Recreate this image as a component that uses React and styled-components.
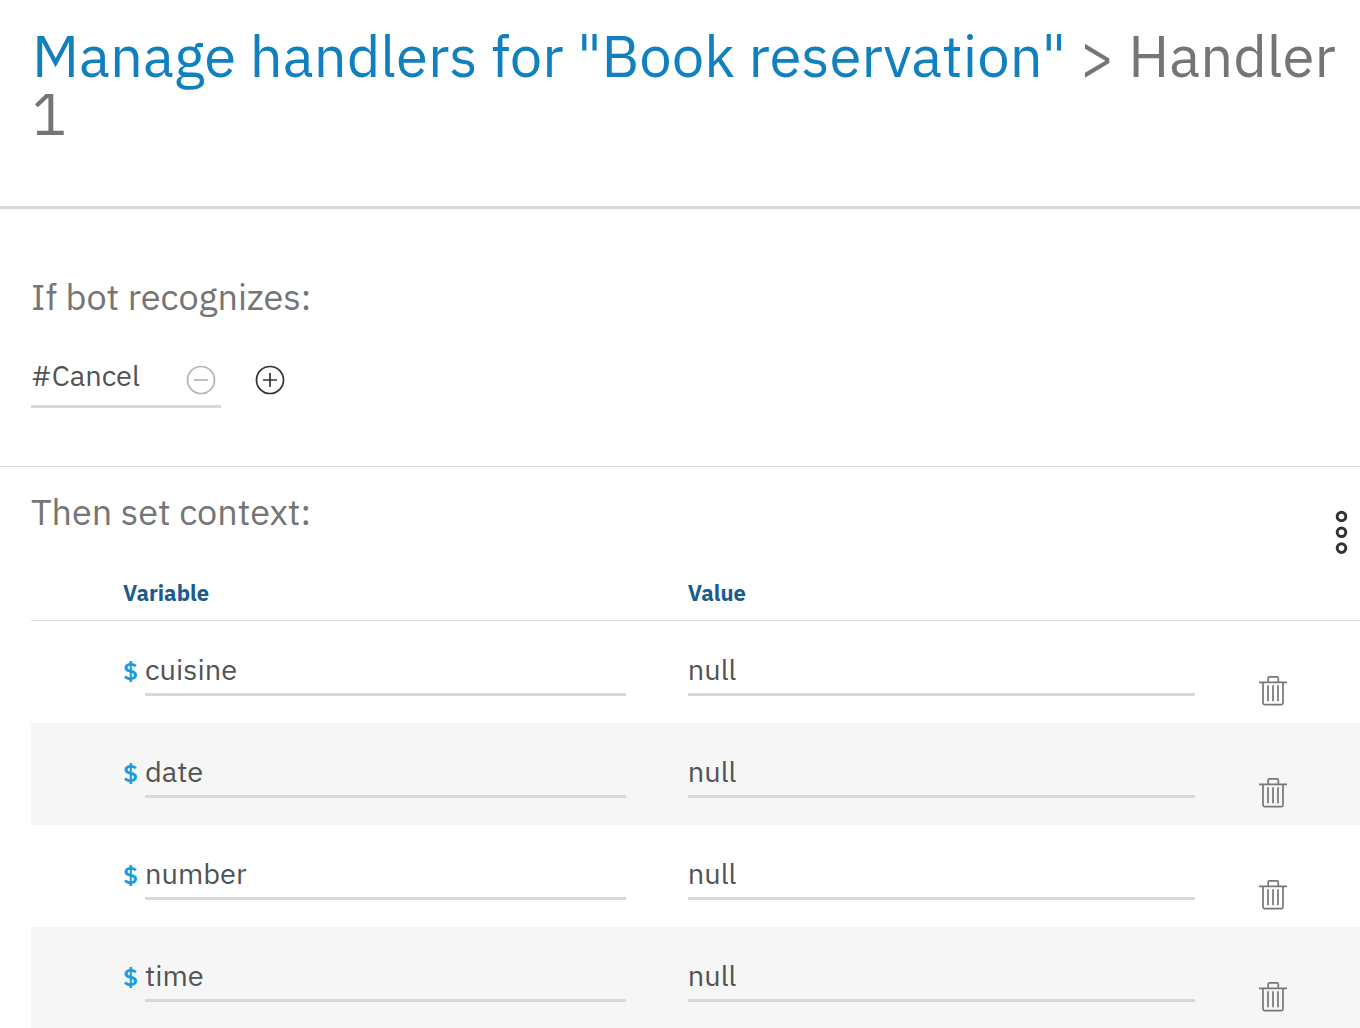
import React, { useState } from "react";
import styled, { createGlobalStyle } from "styled-components";

const GlobalStyle = createGlobalStyle`
  *, *::before, *::after { box-sizing: border-box; }
  body {
    margin: 0;
    background: #fff;
    color: #565656;
    font-family: "IBM Plex Sans", Roboto, "Noto Sans", sans-serif;
  }
`;

const Page = styled.main`
  height: 100vh;
  overflow-y: auto;
  scrollbar-width: none;
`;

const Header = styled.header`
  padding: 27px 16px 63px 32px;
  border-bottom: 3px solid #d8d8d8;
`;

const Title = styled.h1`
  margin: 0;
  font-size: 58px;
  line-height: 58px;
  font-weight: 400;
  color: #757575;
`;

const TitleLink = styled.a`
  color: #1180be;
  text-decoration: none;
`;

const Conditions = styled.section`
  padding: 64px 32px 58px 31px;
  border-bottom: 1px solid #d8d8d8;
`;

const SectionTitle = styled.h2`
  margin: 0;
  font-size: 36px;
  line-height: 48px;
  font-weight: 400;
  color: #757575;
`;

const ConditionRow = styled.div`
  display: flex;
  align-items: center;
  gap: 34px;
  margin-top: 30px;
`;

const Condition = styled.div`
  display: flex;
  align-items: flex-end;
  width: 190px;
  height: 57px;
  padding: 0 5px 10px 0;
  border-bottom: 3px solid #d8d8d8;
`;

const TextField = styled.input`
  flex: 1;
  min-width: 0;
  width: 100%;
  height: ${(p) => (p.$underlined ? 51 : 40)}px;
  padding: 0;
  border: 0;
  border-bottom: ${(p) => (p.$underlined ? "3px solid #d8d8d8" : "0")};
  border-radius: 0;
  outline: 0;
  background: transparent;
  color: #525354;
  font: inherit;
  font-size: 29px;
`;

const IconButton = styled.button`
  display: flex;
  flex: none;
  padding: 0;
  border: 0;
  background: transparent;
  color: ${(p) => p.$color};
  cursor: pointer;
`;

const Context = styled.section`
  padding: 21px 0 0 31px;
`;

const ContextBar = styled.div`
  display: flex;
  align-items: flex-start;
  justify-content: space-between;
  height: 78px;
  padding-right: 12px;
`;

const MenuButton = styled(IconButton)`
  padding-top: 22px;
`;

const VariableTable = styled.table`
  width: 100%;
  table-layout: fixed;
  border-collapse: separate;
  border-spacing: 0;
`;

const HeadCell = styled.th`
  width: ${(p) => p.$width || "auto"};
  height: 55px;
  padding: 0;
  border-bottom: 1px solid #d8d8d8;
  font-size: 22px;
  line-height: 28px;
  font-weight: 700;
  text-align: left;
  color: #1d5b8c;
`;

const Row = styled.tr`
  &:nth-child(even) { background: #f6f6f6; }
`;

const Cell = styled.td`
  height: 102px;
  padding: 24px ${(p) => (p.$gap || 0)}px 0 0;
  vertical-align: top;
`;

const VariableField = styled.label`
  display: flex;
  align-items: center;
`;

const Dollar = styled.span`
  flex: none;
  width: 22px;
  font-size: 25px;
  font-weight: 600;
  color: #1a9be0;
`;

const DeleteCell = styled(Cell)`
  padding: 55px 0 0;
`;

const CircleIcon = ({ plus }) => (
  <svg width="30" height="30" viewBox="0 0 30 30" fill="none" stroke="currentColor" strokeWidth="1.7" aria-hidden="true">
    <circle cx="15" cy="15" r="13.5" />
    <path d={plus ? "M8 15H22M15 8V22" : "M8 15H22"} />
  </svg>
);

const MenuIcon = () => (
  <svg width="13" height="44" viewBox="0 0 13 44" fill="none" stroke="currentColor" strokeWidth="3" aria-hidden="true">
    <circle cx="6.5" cy="6.5" r="4.3" />
    <circle cx="6.5" cy="22.3" r="4.3" />
    <circle cx="6.5" cy="38.1" r="4.3" />
  </svg>
);

const TrashIcon = () => (
  <svg width="28" height="30" viewBox="0 0 28 30" fill="none" stroke="currentColor" strokeWidth="1.7" aria-hidden="true">
    <path d="M0 6.3H28M9.2 6V2.2Q9.2 .9 10.5 .9H18Q19.3 .9 19.3 2.2V6" />
    <path d="M4 6.3V27Q4 28.6 5.6 28.6H22.4Q24 28.6 24 27V6.3" />
    <path d="M9 9.3V25.3M14 9.3V25.3M19 9.3V25.3" />
  </svg>
);

const initialVariables = ["cuisine", "date", "number", "time"].map((name) => ({ name, value: "null" }));

export default function App() {
  const [variables, setVariables] = useState(initialVariables);
  const [conditions, setConditions] = useState(["#Cancel"]);

  return (
    <Page>
      <GlobalStyle />
      <Header>
        <Title>
          <TitleLink href="#handlers">Manage handlers for "Book reservation"</TitleLink> &gt; Handler 1
        </Title>
      </Header>
      <Conditions>
        <SectionTitle>If bot recognizes:</SectionTitle>
        <ConditionRow>
          {conditions.map((condition, i) => (
            <Condition key={i}>
              <TextField aria-label="Condition" defaultValue={condition} />
              <IconButton
                type="button"
                $color="#b4b6b6"
                aria-label="Remove condition"
                onClick={() => setConditions(conditions.filter((_, n) => n !== i))}
              >
                <CircleIcon />
              </IconButton>
            </Condition>
          ))}
          <IconButton
            type="button"
            $color="#323232"
            aria-label="Add condition"
            onClick={() => setConditions([...conditions, ""])}
          >
            <CircleIcon plus />
          </IconButton>
        </ConditionRow>
      </Conditions>
      <Context>
        <ContextBar>
          <SectionTitle>Then set context:</SectionTitle>
          <MenuButton type="button" $color="#323232" aria-label="Context options">
            <MenuIcon />
          </MenuButton>
        </ContextBar>
        <VariableTable>
          <thead>
            <tr>
              <HeadCell $width="92px" />
              <HeadCell $width="42.5%">Variable</HeadCell>
              <HeadCell>Value</HeadCell>
              <HeadCell $width="101px" />
            </tr>
          </thead>
          <tbody>
            {variables.map(({ name, value }) => (
              <Row key={name}>
                <Cell />
                <Cell $gap={62}>
                  <VariableField>
                    <Dollar>$</Dollar>
                    <TextField $underlined aria-label="Variable name" defaultValue={name} />
                  </VariableField>
                </Cell>
                <Cell $gap={64}>
                  <TextField $underlined aria-label={`Value of ${name}`} defaultValue={value} />
                </Cell>
                <DeleteCell>
                  <IconButton
                    type="button"
                    $color="#777"
                    aria-label={`Delete ${name}`}
                    onClick={() => setVariables(variables.filter((v) => v.name !== name))}
                  >
                    <TrashIcon />
                  </IconButton>
                </DeleteCell>
              </Row>
            ))}
          </tbody>
        </VariableTable>
      </Context>
    </Page>
  );
}
